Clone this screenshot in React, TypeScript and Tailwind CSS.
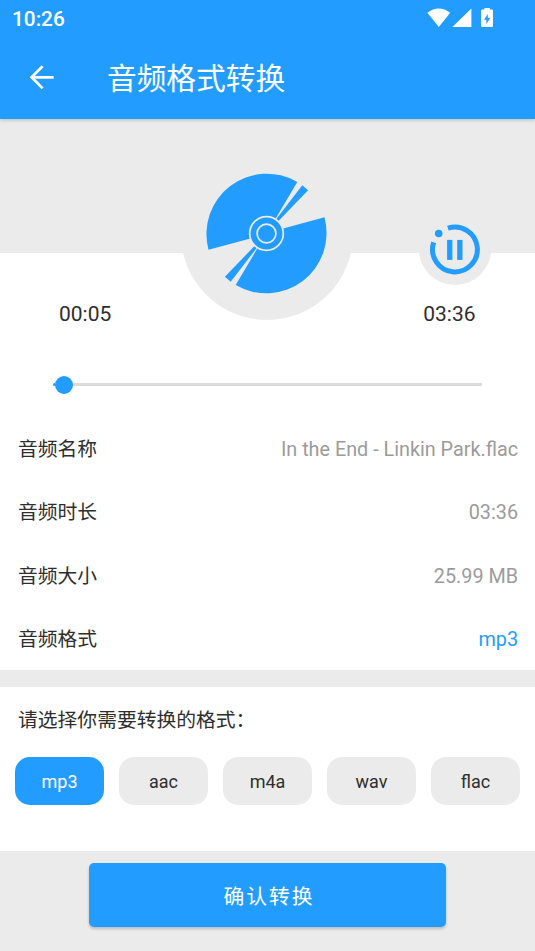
import { useState } from "react";

const details = [
    { label: "音频名称", value: "In the End - Linkin Park.flac", valueClass: "text-[#9b9b9b]" },
    { label: "音频时长", value: "03:36", valueClass: "text-[#9b9b9b]" },
    { label: "音频大小", value: "25.99 MB", valueClass: "text-[#9b9b9b]" },
    { label: "音频格式", value: "mp3", valueClass: "text-[#229dff]" },
];

const formats = ["mp3", "aac", "m4a", "wav", "flac"];

function StatusBar() {
    return (
        <div className="flex h-[37px] items-center justify-between pl-3 pr-[40px]">
            <span className="pt-px text-[20.8px] font-medium leading-none">10:26</span>
            <svg width="68" height="22" viewBox="0 0 68 22" fill="currentColor">
                <path d="M0.4 4.8C7.5 -0.9 16 -0.9 23.2 4.8L11.8 19Z" />
                <path d="M44.4 0.5V19H25.4Z" />
                <path fillRule="evenodd" d="M57.4 -0.3H62.8V1.5H64.8Q66 1.5 66 2.7V17.7Q66 19 64.8 19H55.2Q54 19 54 17.7V2.7Q54 1.5 55.2 1.5H57.4ZM60.8 5.9L57 11.8H59.4V15.9L63.2 9.9H60.8Z" />
            </svg>
        </div>
    );
}

function Disc() {
    return (
        <svg width="122" height="122" viewBox="-60.5 -60.5 122 122" fill="#229dff">
            {[0, 180].map((angle) => (
                <g key={angle} transform={`rotate(${angle})`}>
                    <path d="M30.8 -51.6A60.4 60.4 0 0 0 -58 16.2L0 0.6Z" />
                    <path d="M35.8 -48.3L41.6 -43.2L12 -12.5L9.8 -14.5Z" />
                </g>
            ))}
            <circle r="16.8" stroke="#ebebeb" strokeWidth="1.7" />
            <circle r="9.4" stroke="#ebebeb" strokeWidth="1.7" />
        </svg>
    );
}

function PauseIcon() {
    return (
        <svg width="52" height="52" viewBox="-26 -26.5 52 52" fill="#229dff">
            <path d="M-7.1 -21.3A22.4 22.4 0 1 1 -21.3 -7.1" fill="none" stroke="#229dff" strokeWidth="5" />
            <circle cx="-16.3" cy="-16" r="3.8" />
            <rect x="-7.9" y="-9.6" width="5.3" height="20" />
            <rect x="2.2" y="-9.6" width="5.3" height="20" />
        </svg>
    );
}

export default function App() {
    const [selected, setSelected] = useState("mp3");

    return (
        <div className="flex h-[951px] w-[535px] flex-col overflow-hidden bg-white font-[Roboto,'Noto_Sans_CJK_SC',sans-serif] text-[#2e2e2e]">
            <header className="relative z-10 h-[119px] bg-[#229dff] text-white shadow-[0_1px_4px_rgba(0,0,0,0.2)]">
                <StatusBar />
                <div className="flex h-20 items-center pl-[29px]">
                    <svg width="26" height="26" viewBox="0 0 26 26" fill="none" stroke="currentColor" strokeWidth="2.7">
                        <path d="M24.7 13.3H3M13.6 2.2L2.6 13.3L13.6 24.4" />
                    </svg>
                    <h1 className="ml-[52px] pt-1 text-[29.7px] leading-none">音频格式转换</h1>
                </div>
            </header>

            <section className="relative h-[133.5px] shrink-0 bg-[#ebebeb]">
                <div className="absolute left-[180.5px] top-[28.5px] flex size-[172px] items-center justify-center rounded-full bg-[#ebebeb]">
                    <Disc />
                </div>
                <button className="absolute left-[419px] top-[94.5px] flex size-[71.5px] items-center justify-center rounded-full bg-[#ebebeb]">
                    <PauseIcon />
                </button>
            </section>

            <div className="flex justify-between pl-[59px] pr-[59.5px] pt-[46.5px] text-[21px] leading-[30px]">
                <span>00:05</span>
                <span>03:36</span>
            </div>

            <div className="mx-[53px] mt-[45.5px] flex h-5 items-center">
                <div className="h-[3px] w-[2px] rounded-l-full bg-[#229dff]" />
                <div className="size-[18px] rounded-full bg-[#229dff]" />
                <div className="h-[3px] flex-1 bg-[#dbdbdb]" />
            </div>

            <div className="mt-[22px] h-[253px] shrink-0">
                {details.map((row) => (
                    <div key={row.label} className="flex h-[63.4px] items-center justify-between pl-[18px] pr-[17px] pt-[3px]">
                        <span className="text-[19.8px]">{row.label}</span>
                        <span className={`text-[19.8px] ${row.valueClass}`}>{row.value}</span>
                    </div>
                ))}
            </div>

            <div className="h-[17.5px] shrink-0 bg-[#ebebeb]" />

            <section className="h-[164px] shrink-0">
                <p className="pl-[18px] pt-[19px] text-[19.8px] leading-[30px]">请选择你需要转换的格式：</p>
                <div className="mt-[21px] flex gap-[15px] px-[15px]">
                    {formats.map((format) => (
                        <button
                            key={format}
                            onClick={() => setSelected(format)}
                            className={`h-[47.5px] flex-1 rounded-[15px] pt-[2px] text-[18px] ${selected === format ? "bg-[#229dff] text-white" : "bg-[#ebebeb]"}`}
                        >
                            {format}
                        </button>
                    ))}
                </div>
            </section>

            <footer className="flex flex-1 justify-center bg-[#ebebeb] pt-3">
                <button className="h-16 w-[357px] rounded-[5px] bg-[#229dff] pl-[3px] pt-1.5 text-[20.8px] tracking-[2px] text-white shadow-[0_2px_3px_rgba(0,0,0,0.2)]">
                    确认转换
                </button>
            </footer>
        </div>
    );
}
